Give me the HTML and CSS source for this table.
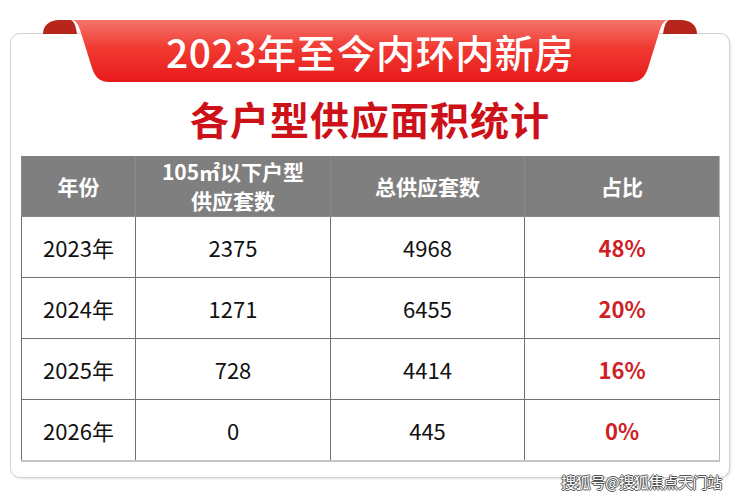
FILE: index.html
```html
<!DOCTYPE html>
<html lang="zh-CN">
<head>
<meta charset="utf-8">
<title>2023年至今内环内新房</title>
<link rel="stylesheet" href="styles.css">
</head>
<body>
<div class="page">
  <div class="card">
    <div class="ribbon">
      <svg class="ribbon-bg" width="654" height="62" viewBox="0 0 654 62" aria-hidden="true">
        <defs>
          <linearGradient id="rg" x1="0" y1="0" x2="0" y2="1">
            <stop offset="0" stop-color="#f4746a"/>
            <stop offset="0.45" stop-color="#f03a32"/>
            <stop offset="1" stop-color="#e81a1a"/>
          </linearGradient>
        </defs>
        <path d="M0,14 C0,5 7,0 16,0 L28,0 C32,2 33,8 34,14 Z" fill="#b7261d"/>
        <path d="M654,14 C654,5 647,0 638,0 L626,0 C622,2 621,8 620,14 Z" fill="#b7261d"/>
        <path d="M28,0 L626,0 C620,0 618,6 615,16 L605,48 C602,57 597,62 588,62 L66,62 C57,62 52,57 49,48 L39,16 C36,6 34,0 28,0 Z" fill="url(#rg)"/>
      </svg>
      <span class="ribbon-text">2023年至今内环内新房</span>
    </div>
    <h1 class="subtitle">各户型供应面积统计</h1>
    <table class="data">
      <colgroup>
        <col class="c1"><col class="c2"><col class="c3"><col class="c4">
      </colgroup>
      <thead>
        <tr>
          <th>年份</th>
          <th>105㎡以下户型<br>供应套数</th>
          <th>总供应套数</th>
          <th>占比</th>
        </tr>
      </thead>
      <tbody>
        <tr><td>2023年</td><td>2375</td><td>4968</td><td class="pct">48%</td></tr>
        <tr><td>2024年</td><td>1271</td><td>6455</td><td class="pct">20%</td></tr>
        <tr><td>2025年</td><td>728</td><td>4414</td><td class="pct">16%</td></tr>
        <tr><td>2026年</td><td>0</td><td>445</td><td class="pct">0%</td></tr>
      </tbody>
    </table>
    <div class="watermark">搜狐号@搜狐焦点天门站</div>
  </div>
</div>
</body>
</html>
```

FILE: styles.css
```css
html, body {
  margin: 0;
  padding: 0;
  background: #ffffff;
}

body {
  font-family: "Noto Sans CJK SC", "Noto Sans", sans-serif;
  width: 740px;
  height: 497px;
  overflow: hidden;
}

.page {
  padding: 33px 10px 0 10px;
}

.card {
  position: relative;
  box-sizing: border-box;
  width: 720px;
  height: 445px;
  border: 1px solid #d3d3d3;
  border-radius: 10px;
  box-shadow: 1px 1px 2px rgba(0, 0, 0, 0.12);
  padding: 56px 10px 0 10px;
  background: #ffffff;
}

.ribbon {
  position: absolute;
  left: 32px;
  top: -14px;
  width: 654px;
  height: 62px;
  display: flex;
  align-items: center;
  justify-content: center;
}

.ribbon-bg {
  position: absolute;
  left: 0;
  top: 0;
}

.ribbon-text {
  position: relative;
  color: #ffffff;
  font-size: 39px;
  font-weight: 500;
  line-height: 1;
  letter-spacing: 0.6px;
}

.subtitle {
  margin: 0;
  text-align: center;
  color: #cc1119;
  font-size: 39px;
  font-weight: 700;
  line-height: 56px;
  letter-spacing: 1px;
}

.data {
  margin-top: 10px;
  width: 698px;
  border-collapse: collapse;
  table-layout: fixed;
}

.c1 { width: 114px; }
.c2 { width: 195px; }
.c3 { width: 194px; }
.c4 { width: 195px; }

.data th {
  background: #7f7f7f;
  color: #ffffff;
  font-size: 21px;
  font-weight: 700;
  line-height: 29px;
  height: 60px;
  padding: 0;
  border: 1px solid #8a8a8a;
  border-top: none;
}

.data td {
  height: 60px;
  padding: 0;
  text-align: center;
  color: #111111;
  font-size: 22px;
  font-weight: 400;
  border: 1px solid #6f6f6f;
}

.data td.pct {
  color: #cf1f26;
  font-weight: 700;
}

.data tbody tr:last-child td {
  border-bottom: 2px solid #c4c4c4;
}

.data td:last-child,
.data th:last-child {
  border-right: 1px solid #b5b5b5;
}

.watermark {
  position: absolute;
  right: 7px;
  bottom: -14px;
  font-size: 15px;
  line-height: 18px;
  color: #ffffff;
  letter-spacing: -0.3px;
  text-shadow: -1px 0 #555, 1px 0 #555, 0 -1px #555, 0 1px #555;
}
```
